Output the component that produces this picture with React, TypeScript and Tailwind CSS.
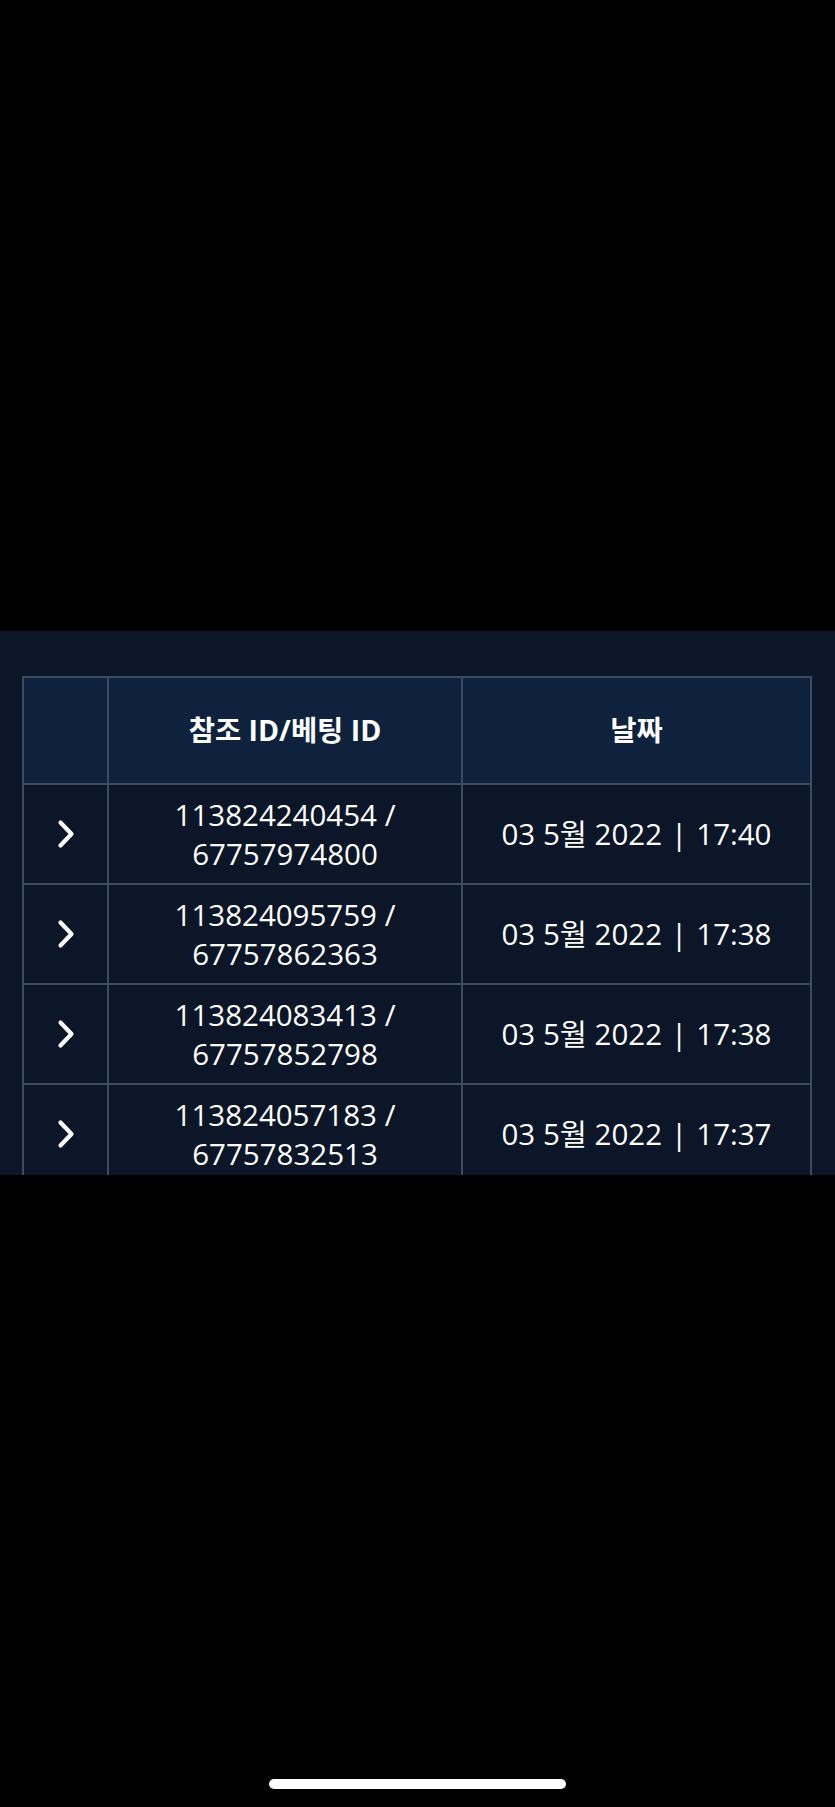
const rows = [
    { ref: '113824240454', bet: '67757974800', date: '03 5월 2022', time: '17:40' },
    { ref: '113824095759', bet: '67757862363', date: '03 5월 2022', time: '17:38' },
    { ref: '113824083413', bet: '67757852798', date: '03 5월 2022', time: '17:38' },
    { ref: '113824057183', bet: '67757832513', date: '03 5월 2022', time: '17:37' },
    { ref: '113824041120', bet: '67757820045', date: '03 5월 2022', time: '17:36' },
]

function Chevron() {
    return (
        <svg width="18" height="30" viewBox="0 0 18 30" fill="none">
            <path d="M3.5 3.5 L14.5 15 L3.5 26.5" stroke="white" strokeWidth="4.2" strokeLinecap="round" strokeLinejoin="round" />
        </svg>
    )
}

export default function App() {
    return (
        <div
            className="w-[835px] h-[1807px] bg-black flex flex-col"
            style={{ fontFamily: '"Open Sans", "Noto Sans CJK KR", sans-serif' }}
        >
            <div className="h-[631px] shrink-0" />

            <section className="h-[544px] shrink-0 overflow-hidden bg-[#0b1728] pt-[45px] pl-[22px] pr-[23px]">
                <table className="w-full table-fixed border-collapse text-white">
                    <colgroup>
                        <col className="w-[85px]" />
                        <col className="w-[354px]" />
                        <col />
                    </colgroup>
                    <thead>
                        <tr className="h-[107px] bg-[#0f223d]">
                            <th className="border-2 border-[#3b4b61]" />
                            <th className="border-2 border-[#3b4b61] text-[28.5px] font-bold">참조 ID/베팅 ID</th>
                            <th className="border-2 border-[#3b4b61] text-[28.5px] font-bold">날짜</th>
                        </tr>
                    </thead>
                    <tbody>
                        {rows.map((r) => (
                            <tr key={r.ref} className="h-[100px] bg-[#0b1628]">
                                <td className="border-2 border-[#3b4b61]">
                                    <div className="flex justify-center">
                                        <Chevron />
                                    </div>
                                </td>
                                <td className="border-2 border-[#3b4b61] text-center text-[29.5px] leading-[39px] font-normal">
                                    {r.ref} /
                                    <br />
                                    {r.bet}
                                </td>
                                <td className="border-2 border-[#3b4b61] text-center text-[29.5px] font-normal">
                                    {r.date}
                                    <span className="mx-[9px]">|</span>
                                    {r.time}
                                </td>
                            </tr>
                        ))}
                    </tbody>
                </table>
            </section>

            <div className="flex-1 flex flex-col justify-end items-center pb-[18px]">
                <div className="w-[297px] h-[10px] rounded-full bg-white" />
            </div>
        </div>
    )
}
